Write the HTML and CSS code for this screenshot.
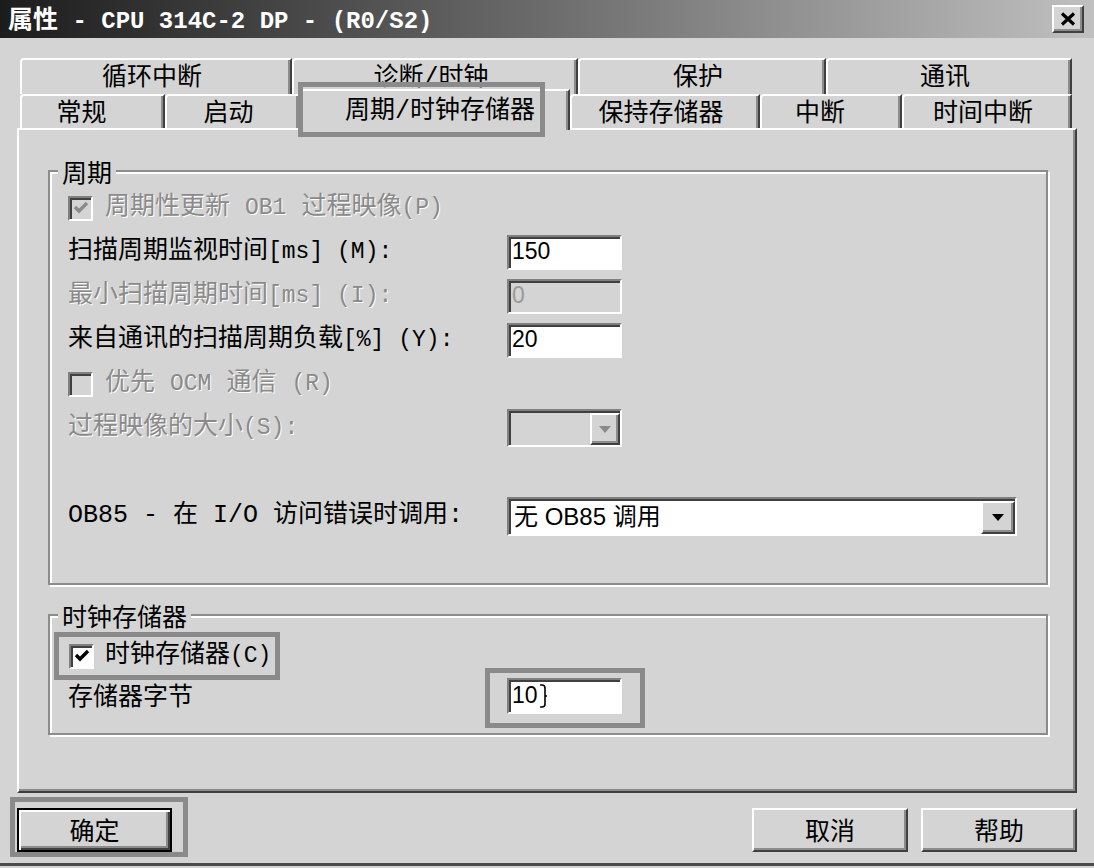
FILE: index.html
```html
<!DOCTYPE html>
<html lang="zh-CN">
<head>
    <meta charset="UTF-8">
    <meta name="viewport" content="width=device-width, initial-scale=1.0">
    <title>属性 - CPU 314C-2 DP - (R0/S2)</title>
    <link rel="stylesheet" href="styles.css">
</head>
<body>
<div class="window">
    <div class="titlebar">
        <span class="title"><span class="title-cjk">属性</span> - CPU 314C-2 DP - (R0/S2)</span>
        <span class="close-btn">
            <svg width="16" height="14" viewBox="0 0 16 14"><path d="M2 1.5 L14 12.5 M14 1.5 L2 12.5" stroke="#000" stroke-width="3.2" fill="none"/></svg>
        </span>
    </div>

    <div class="tabs">
        <div class="tab-row back">
            <div class="tab w272">循环中断</div>
            <div class="tab w286">诊断/时钟</div>
            <div class="tab w248">保护</div>
            <div class="tab w246">通讯</div>
        </div>
        <div class="tab-row front">
            <div class="tab w145">常规</div>
            <div class="tab w135">启动</div>
            <div class="tab selected mark mark-tab">周期/时钟存储器</div>
            <div class="tab w190">保持存储器</div>
            <div class="tab w142">中断</div>
            <div class="tab w170">时间中断</div>
        </div>
    </div>

    <div class="panel">
        <fieldset class="group group-cycle">
            <legend>周期</legend>
            <div class="group-body body-cycle">
                <div class="row disabled">
                    <span class="check off">
                        <svg width="18" height="18" viewBox="0 0 18 18"><path d="M3 8 L7 12 L15 4" stroke="#8a8a8a" stroke-width="3.4" fill="none"/></svg>
                    </span>
                    <span>周期性更新 <span class="en">OB1</span> 过程映像<span class="en">(P)</span></span>
                </div>
                <div class="row">
                    <span class="label">扫描周期监视时间<span class="en">[ms] (M):</span></span>
                    <span class="edit">150</span>
                </div>
                <div class="row disabled">
                    <span class="label">最小扫描周期时间<span class="en">[ms] (I):</span></span>
                    <span class="edit off">0</span>
                </div>
                <div class="row">
                    <span class="label">来自通讯的扫描周期负载<span class="en">[%] (Y):</span></span>
                    <span class="edit">20</span>
                </div>
                <div class="row disabled">
                    <span class="check off"></span>
                    <span>优先 <span class="en">OCM</span> 通信 <span class="en">(R)</span></span>
                </div>
                <div class="row disabled">
                    <span class="label">过程映像的大小<span class="en">(S):</span></span>
                    <span class="combo combo-small off">
                        <span class="combo-text"></span>
                        <span class="combo-btn">
                            <svg width="12" height="7" viewBox="0 0 12 7"><path d="M0 0 H12 L6 7 Z" fill="#8a8a8a"/></svg>
                        </span>
                    </span>
                </div>
                <div class="row row-spaced">
                    <span class="label">OB85 - 在 I/O 访问错误时调用:</span>
                    <span class="combo combo-wide">
                        <span class="combo-text">无 OB85 调用</span>
                        <span class="combo-btn">
                            <svg width="12" height="7" viewBox="0 0 12 7"><path d="M0 0 H12 L6 7 Z" fill="#000"/></svg>
                        </span>
                    </span>
                </div>
            </div>
        </fieldset>

        <fieldset class="group group-clock">
            <legend>时钟存储器</legend>
            <div class="group-body body-clock">
                <div class="check-wrap mark mark-check">
                    <span class="check">
                        <svg width="18" height="18" viewBox="0 0 18 18"><path d="M3 8 L7 12 L15 4" stroke="#000" stroke-width="3.4" fill="none"/></svg>
                    </span>
                    <span>时钟存储器<span class="en">(C)</span></span>
                </div>
                <div class="row row-byte">
                    <span class="label">存储器字节</span>
                    <span class="edit mark mark-edit">10<svg class="ibeam" width="9" height="24" viewBox="0 0 9 24"><path d="M1 1 H3 Q6 1 6 4 V20 Q6 23 3 23 H1 M6 12 H8" stroke="#000" stroke-width="1.6" fill="none"/></svg></span>
                </div>
            </div>
        </fieldset>
    </div>

    <div class="footer">
        <div class="btn btn-default mark mark-ok">确定</div>
        <div class="btn btn-cancel">取消</div>
        <div class="btn">帮助</div>
    </div>
</div>
</body>
</html>
```

FILE: styles.css
```css
* {
    box-sizing: border-box;
}
body {
    margin: 0;
    background-color: #d4d4d4;
    font-family: "Liberation Mono", "Noto Sans CJK SC", monospace;
    font-size: 25px;
    line-height: 1.1;
    color: #000;
}
.window {
    height: 866px;
    border-bottom: 3px solid #4a4a4a;
}
.en {
    font-size: 23px;
}

/* title bar */
.titlebar {
    height: 38px;
    display: flex;
    align-items: center;
    justify-content: space-between;
    padding: 0 10px 0 8px;
    background: linear-gradient(to right, #1c1c1c, #6c6c6c 50%, #c0c0c0);
    color: #fff;
    font-weight: bold;
    line-height: 34px;
}
.title {
    white-space: nowrap;
    font-size: 24px;
}
.title-cjk {
    font-family: "Noto Sans CJK SC", sans-serif;
    font-size: 25px;
}
.close-btn {
    width: 32px;
    height: 28px;
    display: flex;
    align-items: center;
    justify-content: center;
    background-color: #d4d4d4;
    border: 2px solid;
    border-color: #fff #404040 #404040 #fff;
    box-shadow: inset -2px -2px 0 #8c8c8c;
}

/* tabs */
.tabs {
    margin: 20px 0 0 20px;
    width: 1052px;
}
.tab-row {
    display: flex;
}
.tab-row.back {
    height: 36px;
}
.tab-row.front {
    height: 34px;
    align-items: flex-start;
}
.tab {
    height: 100%;
    display: flex;
    align-items: center;
    justify-content: center;
    padding: 3px 8px 0 0;
    background-color: #d4d4d4;
    border-top: 2px solid #fff;
    border-left: 2px solid #fff;
    border-right: 2px solid #404040;
    border-top-left-radius: 4px;
    box-shadow: inset -2px 0 0 #8c8c8c;
    white-space: nowrap;
}
.front .tab {
    height: 34px;
    padding-top: 5px;
}
.front .tab.selected {
    width: 270px;
    height: 41px;
    margin-top: -5px;
    padding: 2px 0 0 10px;
    z-index: 1;
}
.w272 { width: 272px; }
.w286 { width: 286px; }
.w248 { width: 248px; }
.w246 { width: 246px; }
.w145 { width: 145px; padding-right: 22px; }
.w135 { width: 135px; }
.w190 { width: 190px; }
.w142 { width: 142px; padding-right: 22px; }
.w170 { width: 170px; }

/* page panel */
.panel {
    margin: 0 17px;
    height: 665px;
    border: 2px solid;
    border-color: #fff #404040 #404040 #fff;
    box-shadow: inset -2px -2px 0 #8c8c8c;
}
.group {
    margin: 0 27px 0 29px;
    padding: 0;
    min-width: 0;
    border: 2px solid #8c8c8c;
    box-shadow: inset 2px 2px 0 #fff, 2px 2px 0 #fff;
}
.group legend {
    margin-left: 8px;
    padding: 0 4px;
    line-height: 26px;
    background-color: #d4d4d4;
    font-family: "Noto Sans CJK SC", sans-serif;
}
.group-cycle {
    margin-top: 28px;
}
.group-clock {
    margin-top: 17px;
}
.group-body {
    padding-left: 18px;
}
.body-cycle {
    padding-top: 2px;
    padding-bottom: 45px;
}
.body-clock {
    padding-top: 9px;
    padding-bottom: 18px;
}
.row {
    display: flex;
    align-items: center;
    height: 44px;
    white-space: nowrap;
}
.row-spaced {
    margin-top: 44px;
}
.row-byte {
    height: 38px;
    margin-top: 2px;
}
.row-byte .label {
    padding-top: 6px;
}
.label {
    width: 439px;
    flex: none;
}
.disabled {
    color: #8a8a8a;
    text-shadow: 1px 1px 0 #fff;
}

/* controls */
.check {
    width: 25px;
    height: 25px;
    flex: none;
    margin-right: 12px;
    display: flex;
    align-items: center;
    justify-content: center;
    background-color: #fff;
    border: 2px solid;
    border-color: #808080 #fff #fff #808080;
    box-shadow: inset 2px 2px 0 #404040;
}
.check.off {
    background-color: #d4d4d4;
}
.check-wrap {
    display: flex;
    align-items: center;
    width: 216px;
    height: 38px;
    margin-left: -9px;
    padding-left: 10px;
    white-space: nowrap;
}
.check-wrap .check {
    margin-right: 11px;
}
.edit {
    width: 115px;
    height: 35px;
    display: flex;
    align-items: center;
    padding-left: 3px;
    background-color: #fff;
    border: 2px solid;
    border-color: #808080 #fff #fff #808080;
    box-shadow: inset 2px 2px 0 #404040;
    font-family: "Liberation Sans", sans-serif;
    font-size: 23px;
    text-shadow: none;
}
.edit.off {
    background-color: #d4d4d4;
    color: #9a9a9a;
}
.ibeam {
    margin-left: 1px;
}
.row-byte .edit {
    height: 36px;
}
.combo {
    display: flex;
    align-items: stretch;
    justify-content: space-between;
    background-color: #fff;
    border: 2px solid;
    border-color: #808080 #fff #fff #808080;
    box-shadow: inset 2px 2px 0 #404040;
    padding: 2px 0 0 2px;
}
.combo.off {
    background-color: #d4d4d4;
}
.combo-small {
    width: 115px;
    height: 38px;
}
.combo-wide {
    width: 510px;
    height: 39px;
}
.combo-text {
    display: flex;
    align-items: center;
    padding-left: 3px;
    font-family: "Liberation Sans", "Noto Sans CJK SC", sans-serif;
    font-size: 24px;
}
.combo-btn {
    width: 34px;
    display: flex;
    align-items: center;
    justify-content: center;
    background-color: #d4d4d4;
    border: 2px solid;
    border-color: #fff #404040 #404040 #fff;
    box-shadow: inset -2px -2px 0 #8c8c8c;
}
.combo-small .combo-btn {
    width: 30px;
}

/* buttons */
.footer {
    display: flex;
    gap: 13px;
    margin-top: 15px;
    padding: 0 17px;
}
.btn {
    width: 156px;
    height: 44px;
    display: flex;
    align-items: center;
    justify-content: center;
    border: 2px solid;
    border-color: #fff #404040 #404040 #fff;
    box-shadow: inset -2px -2px 0 #8c8c8c;
    font-family: "Noto Sans CJK SC", sans-serif;
}
.btn-default {
    width: 155px;
    border-color: #000;
    box-shadow: inset 2px 2px 0 #fff, inset -2px -2px 0 #404040, inset -4px -4px 0 #8c8c8c;
}
.btn-cancel {
    margin-left: auto;
}

/* grey annotation frames drawn over the dialog */
.mark {
    position: relative;
}
.mark::after {
    content: "";
    position: absolute;
    border: 5px solid #8a8a8a;
    pointer-events: none;
}
.mark-tab::after {
    top: -9px;
    right: 23px;
    bottom: -7px;
    left: -4px;
}
.mark-check::after {
    top: -5px;
    right: -5px;
    bottom: -5px;
    left: -5px;
}
.mark-edit::after {
    top: -12px;
    right: -25px;
    bottom: -16px;
    left: -24px;
}
.mark-ok::after {
    top: -13px;
    right: -18px;
    bottom: -7px;
    left: -9px;
}
```
